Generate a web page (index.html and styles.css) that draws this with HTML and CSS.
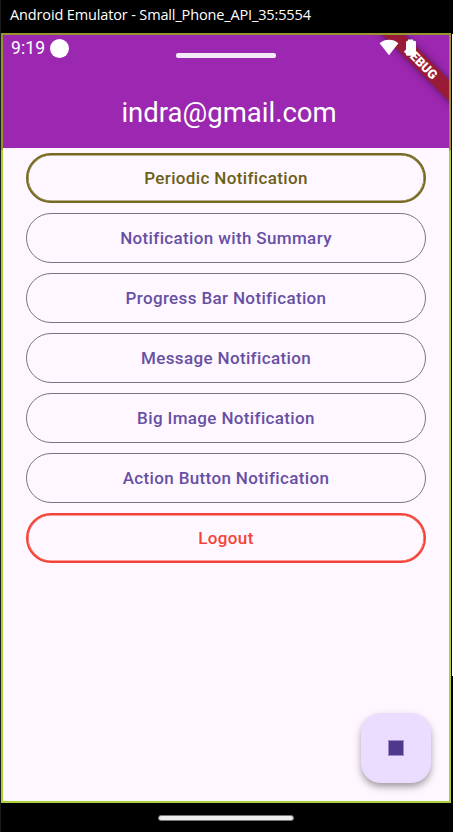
FILE: index.html
```html
<!DOCTYPE html>
<html lang="en">
<head>
<meta charset="utf-8">
<title>Android Emulator</title>
<link rel="stylesheet" href="styles.css">
</head>
<body>
<div class="window">
  <div class="titlebar"><span class="titletext">Android Emulator - Small_Phone_API_35:5554</span></div>
  <main class="screen">
    <header class="appbar">
      <div class="status">
        <span class="clock">9:19</span>
        <span class="dot"></span>
        <span class="notch"></span>
        <svg class="wifi" width="20" height="17" viewBox="0 0 20 17"><path d="M10 16.2.6 4.2Q4.8.8 10 .8t9.400 3.400z" fill="#fff"/></svg>
        <svg class="battery" width="12" height="17" viewBox="0 0 12 17"><path d="M3 .5h5v1.300h1.500q1.500 0 1.500 1.500V16q0 .8-1.500.8H2.500Q1 16.800 1 16V3.300q0-1.500 1.500-1.500H3z" fill="#fff"/></svg>
      </div>
      <h1>indra@gmail.com</h1>
      <div class="corner"><div class="debug">DEBUG</div></div>
    </header>
    <div class="list">
      <button class="periodic">Periodic Notification</button>
      <button>Notification with Summary</button>
      <button>Progress Bar Notification</button>
      <button>Message Notification</button>
      <button>Big Image Notification</button>
      <button>Action Button Notification</button>
      <button class="logout">Logout</button>
    </div>
    <button class="fab" aria-label="Stop"><span class="stop"></span></button>
  </main>
  <footer class="navbar"><span class="handle"></span></footer>
  <span class="edge"></span>
</div>
</body>
</html>
```
FILE: styles.css
```css
* { box-sizing: border-box; }
body { margin: 0; background: #000; font-family: Roboto, sans-serif; }
.window {
  position: relative;
  display: flex;
  flex-direction: column;
  width: 453px;
  height: 832px;
  overflow: hidden;
  padding-right: 2px;
  border-left: 1px solid #1c1c1c;
  background: #000;
}
.titlebar {
  height: 33px;
  padding-left: 9px;
  line-height: 30px;
  color: #fff;
  font-family: "Open Sans", sans-serif;
  font-size: 14.5px;
  white-space: nowrap;
}
.titletext { letter-spacing: -0.14px; }
.screen {
  position: relative;
  display: flex;
  flex-direction: column;
  height: 770px;
  border: 2px solid #acd036;
  background: #fef7ff;
}
.screen::before {
  content: "";
  position: absolute;
  inset: -2px -2px auto;
  height: 115px;
  border: 2px solid #97952f;
  border-bottom: 0;
}
.appbar {
  position: relative;
  height: 113px;
  background: #9c27b0;
  color: #fff;
}
.status {
  position: relative;
  z-index: 2;
  display: flex;
  align-items: center;
  height: 25px;
  padding-left: 8px;
}
.clock { width: 35px; padding-top: 2px; font-size: 17.5px; line-height: 25px; letter-spacing: 0.1px; }
.dot { width: 19px; height: 19px; margin: 1px 0 0 4px; border-radius: 50%; background: #fff; }
.notch { width: 100px; height: 5px; margin: 16px 0 0 107px; border-radius: 2px; background: #f3ebf5; }
.wifi { margin-left: 103px; }
.battery { margin-left: 6px; }
h1 {
  margin: 33px 0 0 6px;
  text-align: center;
  font-size: 27.5px;
  font-weight: 400;
  line-height: 40px;
}
.corner { position: absolute; inset: 0 0 auto auto; width: 110px; height: 110px; overflow: hidden; }
.debug {
  position: absolute;
  top: 20px;
  left: 7px;
  width: 150px;
  height: 15px;
  transform: rotate(45deg);
  background: #9a1b36;
  box-shadow: 0 0 7px rgba(0, 0, 0, .5);
  text-align: center;
  font-size: 12.75px;
  font-weight: 900;
  line-height: 15px;
}
.list { display: flex; flex-direction: column; gap: 10px; padding: 5px 23px; }
.list button {
  height: 50px;
  padding: 0;
  border: 1px solid #79747e;
  border-radius: 25px;
  background: transparent;
  color: #6750a4;
  font: 500 17px/48px Roboto, sans-serif;
  letter-spacing: 0.36px;
}
.list .periodic { border: 2px solid #766a20; box-shadow: inset 0 0 0 .6px #766a20; color: #6a6018; line-height: 46px; }
.list .logout { border: 2px solid #f44336; box-shadow: inset 0 0 0 .6px #f44336; color: #f44336; line-height: 46px; }
.fab {
  display: grid;
  place-items: center;
  width: 70px;
  height: 70px;
  margin: auto 18px 18px auto;
  padding: 0;
  border: 0;
  border-radius: 20px;
  background: #eaddff;
  box-shadow: 0 4px 6px -1px rgba(0, 0, 0, .25), 0 4px 10px rgba(0, 0, 0, .18);
}
.stop { width: 16px; height: 16px; border: 1px solid #a08bc8; background: #4f378b; }
.navbar { display: flex; justify-content: center; height: 29px; padding-top: 12px; }
.handle { width: 136px; height: 6px; border: 1px solid #777; border-radius: 3px; background: #ebebeb; }
.edge { position: absolute; right: 0; top: 34px; width: 1px; height: 642px; background: #fff; }
```
